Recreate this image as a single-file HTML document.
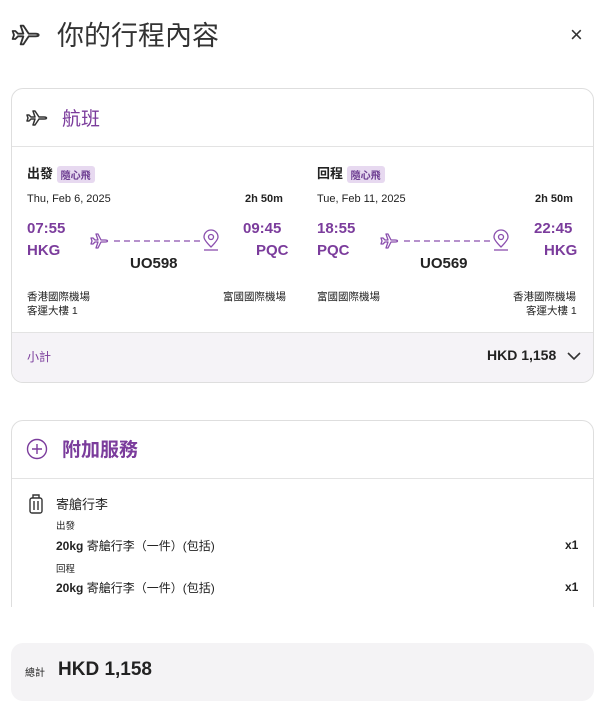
<!DOCTYPE html>
<html><head><meta charset="utf-8"><style>
*{box-sizing:border-box;margin:0;padding:0}
body{width:600px;height:711px;background:#fff;font-family:"Liberation Sans","Noto Sans CJK TC",sans-serif;color:#222;position:relative;overflow:hidden}
.a{position:absolute;white-space:nowrap}
.p{color:#7b3c9c}
.b{font-weight:bold}
.card{position:absolute;left:11px;width:583px;border:1px solid #dedede;border-radius:12px;background:#fff;overflow:hidden}
.badge{display:inline-block;background:#e7d9f0;color:#6b3a8f;font-size:10px;padding:1px 4px;border-radius:3px;vertical-align:middle}
</style></head><body>
<svg class="a" style="left:10px;top:19px" width="32" height="32" viewBox="0 0 24 24" fill="none" stroke="#333" stroke-width="1.4" stroke-linejoin="round"><path d="M2 9h2l2 2h4L8 5h2l4 6h5c1.5 0 2.5.5 2.5 1s-1 1-2.5 1h-5l-4 6H8l2-6H6l-2 2H2l1-3z"/></svg>
<div class="a" style="left:57px;top:14px;font-size:27px;color:#333">你的行程內容</div>
<div class="a" style="left:570px;top:22px;font-size:22px;color:#333">×</div>

<div class="card" style="top:88px;height:295px">
 <svg class="a" style="left:13px;top:17px" width="24" height="24" viewBox="0 0 24 24" fill="none" stroke="#333" stroke-width="1.5" stroke-linejoin="round"><path d="M2 9h2l2 2h4L8 5h2l4 6h5c1.5 0 2.5.5 2.5 1s-1 1-2.5 1h-5l-4 6H8l2-6H6l-2 2H2l1-3z"/></svg>
 <div class="a p" style="left:50px;top:15px;font-size:19px">航班</div>
 <div class="a" style="left:0;top:57px;width:583px;border-top:1px solid #e3e3e3"></div>
 <div class="a b" style="left:15px;top:74px;font-size:13px">出發 <span class="badge">隨心飛</span></div>
 <div class="a" style="left:15px;top:104px;font-size:11px">Thu, Feb 6, 2025</div>
 <div class="a b" style="left:233px;top:104px;font-size:11px">2h 50m</div>
 <div class="a b p" style="left:15px;top:131px;font-size:15px">07:55</div>
 <div class="a b p" style="left:15px;top:153px;font-size:15px">HKG</div>
 <div class="a b p" style="left:231px;top:131px;font-size:15px">09:45</div>
 <div class="a b p" style="left:244px;top:153px;font-size:15px">PQC</div>
 <svg class="a" style="left:78px;top:140px" width="140" height="24" viewBox="0 0 140 24" fill="none" stroke="#8b4fae" stroke-width="1.3" stroke-linejoin="round"><path d="M1 9h2l2 2h3L6 5h2l3 6h4c1.5 0 2.5.5 2.5 1s-1 1-2.5 1h-4l-3 6H6l2-6H5l-2 2H1l1-3z"/><path d="M24 12h86" stroke-dasharray="6 4"/><path d="M121 18c-5-5-7-8-7-10a7 7 0 0 1 14 0c0 2-2 5-7 10z"/><circle cx="121" cy="8" r="2.5"/><path d="M114 21h14"/></svg>
 <div class="a b" style="left:118px;top:166px;font-size:15px">UO598</div>
 <div class="a" style="left:15px;top:200px;font-size:10.5px">香港國際機場</div>
 <div class="a" style="left:15px;top:214px;font-size:10.5px">客運大樓 1</div>
 <div class="a" style="left:211px;top:200px;font-size:10.5px">富國國際機場</div>

 <div class="a b" style="left:305px;top:74px;font-size:13px">回程 <span class="badge">隨心飛</span></div>
 <div class="a" style="left:305px;top:104px;font-size:11px">Tue, Feb 11, 2025</div>
 <div class="a b" style="left:523px;top:104px;font-size:11px">2h 50m</div>
 <div class="a b p" style="left:305px;top:131px;font-size:15px">18:55</div>
 <div class="a b p" style="left:305px;top:153px;font-size:15px">PQC</div>
 <div class="a b p" style="left:522px;top:131px;font-size:15px">22:45</div>
 <div class="a b p" style="left:532px;top:153px;font-size:15px">HKG</div>
 <svg class="a" style="left:368px;top:140px" width="140" height="24" viewBox="0 0 140 24" fill="none" stroke="#8b4fae" stroke-width="1.3" stroke-linejoin="round"><path d="M1 9h2l2 2h3L6 5h2l3 6h4c1.5 0 2.5.5 2.5 1s-1 1-2.5 1h-4l-3 6H6l2-6H5l-2 2H1l1-3z"/><path d="M24 12h86" stroke-dasharray="6 4"/><path d="M121 18c-5-5-7-8-7-10a7 7 0 0 1 14 0c0 2-2 5-7 10z"/><circle cx="121" cy="8" r="2.5"/><path d="M114 21h14"/></svg>
 <div class="a b" style="left:408px;top:166px;font-size:15px">UO569</div>
 <div class="a" style="left:305px;top:200px;font-size:10.5px">富國國際機場</div>
 <div class="a" style="left:501px;top:200px;font-size:10.5px">香港國際機場</div>
 <div class="a" style="left:514px;top:214px;font-size:10.5px">客運大樓 1</div>

 <div class="a" style="left:0;top:243px;width:583px;height:52px;background:#f5f3f7;border-top:1px solid #e3e3e3"></div>
 <div class="a p" style="left:15px;top:259px;font-size:12px">小計</div>
 <div class="a b" style="left:475px;top:258px;font-size:14px">HKD 1,158</div>
 <svg class="a" style="left:554px;top:261px" width="16" height="12" viewBox="0 0 16 12" fill="none" stroke="#333" stroke-width="1.6"><path d="M2 3l6 6 6-6"/></svg>
</div>

<div class="card" style="top:420px;height:240px">
 <svg class="a" style="left:14px;top:17px" width="22" height="22" viewBox="0 0 22 22" fill="none" stroke="#7b3c9c" stroke-width="1.4"><circle cx="11" cy="11" r="9.5"/><path d="M11 6v10M6 11h10"/></svg>
 <div class="a b p" style="left:50px;top:14px;font-size:19px">附加服務</div>
 <div class="a" style="left:0;top:57px;width:583px;border-top:1px solid #e3e3e3"></div>
 <svg class="a" style="left:16px;top:73px" width="16" height="20" viewBox="0 0 16 20" fill="none" stroke="#333" stroke-width="1.4"><rect x="2" y="4" width="12" height="15" rx="2"/><path d="M5 4V1h6v3M6 7v9M10 7v9"/></svg>
 <div class="a" style="left:44px;top:73px;font-size:13px">寄艙行李</div>
 <div class="a" style="left:44px;top:97px;font-size:9.5px">出發</div>
 <div class="a" style="left:44px;top:116px;font-size:12px"><b>20kg</b> 寄艙行李（一件）(包括)</div>
 <div class="a b" style="left:553px;top:117px;font-size:12px">x1</div>
 <div class="a" style="left:44px;top:140px;font-size:9.5px">回程</div>
 <div class="a" style="left:44px;top:158px;font-size:12px"><b>20kg</b> 寄艙行李（一件）(包括)</div>
 <div class="a b" style="left:553px;top:159px;font-size:12px">x1</div>
</div>
<div class="a" style="left:0;top:607px;width:600px;height:104px;background:#fff"></div>
<div class="a" style="left:11px;top:643px;width:583px;height:58px;background:#f4f3f5;border-radius:12px"></div>
<div class="a" style="left:25px;top:664px;font-size:10px">總計</div>
<div class="a b" style="left:58px;top:659px;font-size:19px">HKD 1,158</div>
</body></html>
